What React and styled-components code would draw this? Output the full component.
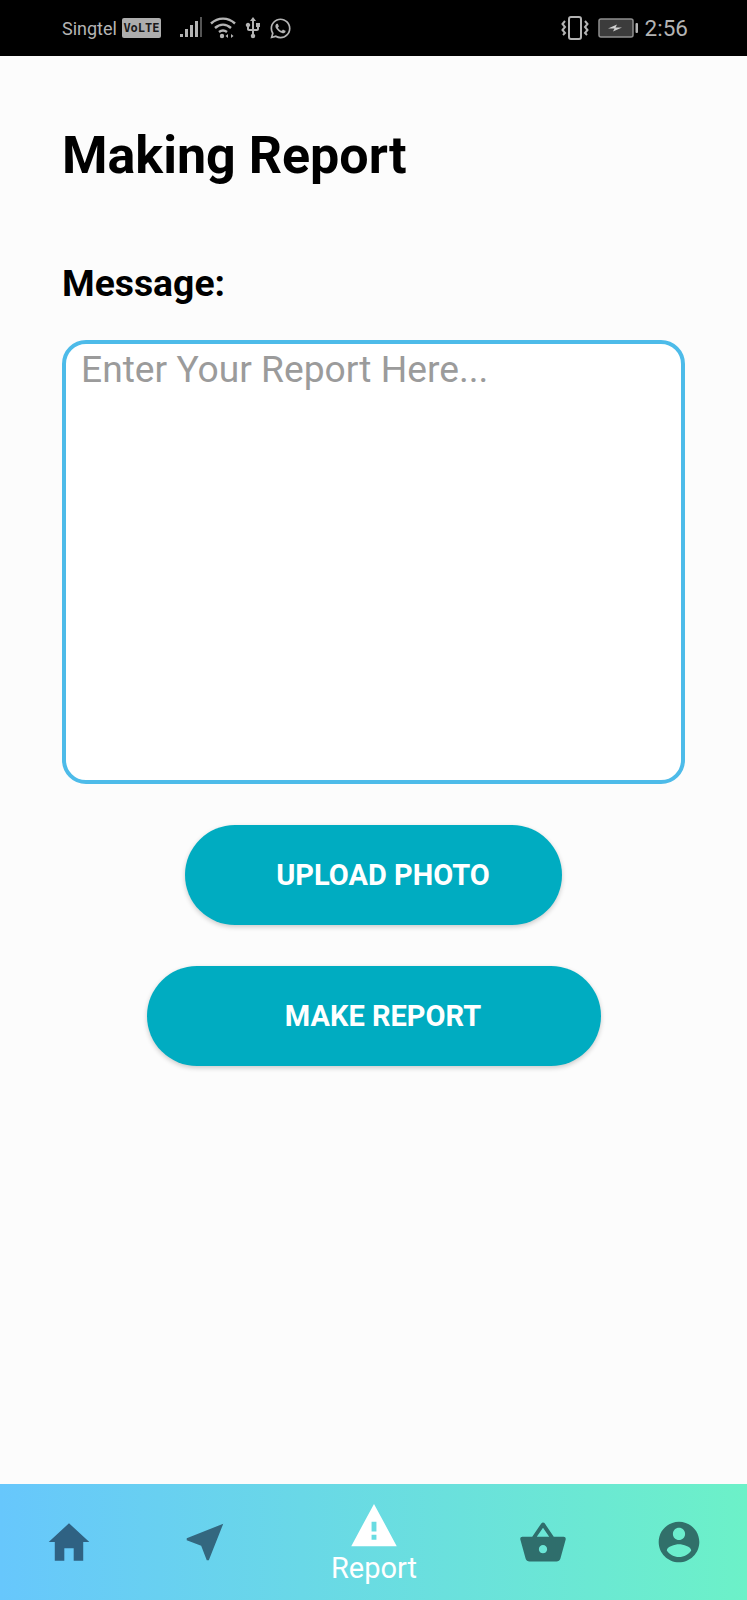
import React from 'react'
import styled, { createGlobalStyle } from 'styled-components'
import { IoMdHome, IoMdNavigate, IoMdBasket, IoMdContact, IoMdWarning } from 'react-icons/io'
import { FaWhatsapp } from 'react-icons/fa'
import { MdUsb } from 'react-icons/md'

const GlobalStyle = createGlobalStyle`
  html, body {
    margin: 0;
    padding: 0;
    background: #fcfcfc;
    font-family: Roboto, "Liberation Sans", sans-serif;
  }
`

function SignalBars() {
  return (
    <svg width="24" height="24" viewBox="0 0 24 24" fill="#b4b4b4">
      <rect x="0" y="18" width="3" height="3" />
      <rect x="5" y="13" width="3" height="8" />
      <rect x="10" y="9" width="3" height="12" />
      <rect x="15" y="5" width="3" height="16" />
      <rect x="20" y="1" width="2" height="20" fill="#555" />
    </svg>
  )
}

function Wifi() {
  return (
    <svg width="26" height="24" viewBox="0 0 26 24" fill="none" stroke="#b4b4b4" strokeWidth="2.400">
      <path d="M1 7.500C8 1 18 1 25 7.500" />
      <path d="M5 12c5-4.500 11-4.500 16 0" />
      <path d="M9 16c2.500-2 5.500-2 8 0" />
      <circle cx="12" cy="20" r="2.200" fill="#b4b4b4" stroke="none" />
      <path d="M18 18l-2.500 2 2.500 2zM21 18l2.500 2-2.500 2z" fill="#b4b4b4" stroke="none" />
    </svg>
  )
}

function Vibrate() {
  return (
    <svg width="28" height="26" viewBox="0 0 28 26" fill="none" stroke="#b4b4b4" strokeWidth="2">
      <rect x="8" y="2" width="12" height="22" rx="2" />
      <path d="M4 6L1.500 9 4 12 1.500 15 4 18 2 20" />
      <path d="M24 6l2.500 3L24 12l2.500 3L24 18l2 2" />
    </svg>
  )
}

function Battery() {
  return (
    <svg width="40" height="20" viewBox="0 0 40 20">
      <rect x="1" y="1" width="34" height="18" rx="2" fill="#3c3c3c" stroke="#8f8f8f" strokeWidth="1.500" />
      <rect x="37.500" y="5" width="2.500" height="10" rx="1" fill="#b4b4b4" />
      <path d="M10 10.500l9-4-1.500 3h6.500l-9 4 1.500-3z" fill="#d0d0d0" />
    </svg>
  )
}

export default function App() {
  return (
    <Screen>
      <GlobalStyle />
      <StatusBar>
        <StatusGroup>
          <Carrier>Singtel</Carrier>
          <VolteBadge>VoLTE</VolteBadge>
          <SignalSlot>
            <SignalBars />
          </SignalSlot>
          <Wifi />
          <UsbSlot>
            <MdUsb size={24} color="#b4b4b4" />
          </UsbSlot>
          <WhatsappSlot>
            <FaWhatsapp size={23} color="#b4b4b4" />
          </WhatsappSlot>
        </StatusGroup>
        <StatusGroup>
          <Vibrate />
          <Battery />
          <Clock>2:56</Clock>
        </StatusGroup>
      </StatusBar>

      <Content>
        <Title>Making Report</Title>
        <FieldLabel>Message:</FieldLabel>
        <MessageBox>Enter Your Report Here...</MessageBox>
        <Actions>
          <PillButton $width={377}>UPLOAD PHOTO</PillButton>
          <PillButton $width={454}>MAKE REPORT</PillButton>
        </Actions>
      </Content>

      <TabBar>
        <Tab>
          <IoMdHome size={50} color="#2f6283" />
        </Tab>
        <Tab>
          <NavigateIcon size={50} color="#33677f" />
        </Tab>
        <Tab>
          <IoMdWarning size={52} color="#ffffff" />
          <TabLabel>Report</TabLabel>
        </Tab>
        <Tab>
          <IoMdBasket size={52} color="#2f6e6c" />
        </Tab>
        <Tab>
          <IoMdContact size={50} color="#31706a" />
        </Tab>
      </TabBar>
    </Screen>
  )
}

const Screen = styled.div`
  width: 747px;
  height: 1600px;
  display: flex;
  flex-direction: column;
  background: #fcfcfc;
  overflow: hidden;
`

const StatusBar = styled.div`
  height: 56px;
  flex-shrink: 0;
  display: flex;
  align-items: center;
  justify-content: space-between;
  padding: 0 59px 0 62px;
  background: #000;
  color: #b4b4b4;
`

const StatusGroup = styled.div`
  display: flex;
  align-items: center;
  gap: 9px;
`

const Carrier = styled.span`
  font-size: 18px;
  margin-right: -4px;
`

const VolteBadge = styled.span`
  width: 39px;
  height: 20px;
  border-radius: 2px;
  background: #adadad;
  color: #1a1a1a;
  font-family: "DejaVu Sans Mono", monospace;
  font-size: 12px;
  font-weight: 700;
  line-height: 20px;
  text-align: center;
`

const SignalSlot = styled.span`
  display: flex;
  margin: 0 -3px 0 10px;
`

const UsbSlot = styled.span`
  display: flex;
  margin-left: -4px;
`

const WhatsappSlot = styled.span`
  display: flex;
  margin-left: -5px;
`

const Clock = styled.span`
  font-size: 22.500px;
  margin-left: -2px;
`

const Content = styled.main`
  flex: 1;
  display: flex;
  flex-direction: column;
  padding: 70px 62px 0 62px;
`

const Title = styled.h1`
  margin: 0;
  font-size: 52px;
  line-height: 60px;
  font-weight: 700;
  color: #000;
`

const FieldLabel = styled.div`
  margin-top: 75px;
  font-size: 37.300px;
  line-height: 44px;
  font-weight: 700;
  color: #000;
`

const MessageBox = styled.div`
  box-sizing: border-box;
  height: 444px;
  margin-top: 35px;
  padding: 3px 15px;
  border: 4px solid #4dbbe9;
  border-radius: 24px;
  background: #fff;
  color: #9b9b9b;
  font-size: 37.200px;
  line-height: 44px;
`

const Actions = styled.div`
  display: flex;
  flex-direction: column;
  align-items: center;
  gap: 41px;
  margin-top: 41px;
`

const PillButton = styled.button`
  width: ${props => props.$width}px;
  height: 100px;
  padding: 0 0 0 19px;
  border: none;
  border-radius: 50px;
  background: #00acc1;
  box-shadow: 0 2px 5px rgba(0, 0, 0, 0.2);
  color: #fff;
  font-family: Roboto, "Liberation Sans", sans-serif;
  font-size: 29px;
  font-weight: 700;
`

const TabBar = styled.nav`
  height: 116px;
  flex-shrink: 0;
  display: grid;
  grid-template-columns: 137px 137px 200px 137px 136px;
  background: linear-gradient(90deg, #67c7fc 0%, #6cf1c8 100%);
`

const Tab = styled.div`
  display: flex;
  flex-direction: column;
  align-items: center;
  justify-content: center;
`

const NavigateIcon = styled(IoMdNavigate)`
  transform: translate(4px, -5px) rotate(45deg);
`

const TabLabel = styled.span`
  margin-top: 0;
  font-size: 29px;
  line-height: 34px;
  color: #fff;
`
